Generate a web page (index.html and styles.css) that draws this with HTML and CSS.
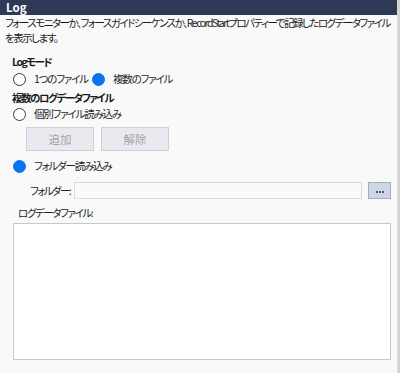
FILE: index.html
```html
<!DOCTYPE html>
<html lang="ja">
<head>
<meta charset="utf-8">
<link rel="stylesheet" href="styles.css">
</head>
<body>
<div class="window">
  <div class="panel">
    <div class="titlebar">Log</div>
    <div class="desc">フォースモニターか、フォースガイドシーケンスか、RecordStartプロパティーで記録したログデータファイルを表示します。</div>
    <div class="heading h-mode">Logモード</div>
    <div class="radio-row r-mode">
      <label class="radio r-first"><span class="dot"></span><span class="rtext">1つのファイル</span></label>
      <label class="radio"><span class="dot on"></span><span class="rtext">複数のファイル</span></label>
    </div>
    <div class="heading h-multi">複数のログデータファイル</div>
    <div class="radio-row r-single">
      <label class="radio"><span class="dot"></span><span class="rtext">個別ファイル読み込み</span></label>
    </div>
    <div class="btn-row">
      <div class="btn">追加</div>
      <div class="btn">解除</div>
    </div>
    <div class="radio-row r-folder">
      <label class="radio"><span class="dot on"></span><span class="rtext">フォルダー読み込み</span></label>
    </div>
    <div class="folder-row">
      <span class="flabel">フォルダー:</span>
      <div class="finput"></div>
      <div class="browse"><span class="dots"><i></i><i></i><i></i></span></div>
    </div>
    <div class="loglabel">ログデータファイル:</div>
    <div class="logbox"></div>
  </div>
  <div class="edge"></div>
</div>
</body>
</html>
```

FILE: styles.css
```css
html, body {
  margin: 0;
  padding: 0;
  background: #f9f9f9;
  width: 400px;
  height: 373px;
  overflow: hidden;
}
body {
  font-family: "Noto Sans CJK JP", "Noto Sans", sans-serif;
  font-size: 10.5px;
  letter-spacing: -1.2px;
  color: #1b1b1b;
  font-feature-settings: "palt";
  white-space: nowrap;
}
.window {
  display: flex;
  height: 373px;
}
.panel {
  width: 397px;
  display: flex;
  flex-direction: column;
}
.edge {
  width: 3px;
  background: linear-gradient(to right, #e4e4e4 0, #d2d2d2 1px, #d2d2d2 3px);
}
.titlebar {
  height: 15px;
  line-height: 15px;
  background: #2e3a55;
  color: #fff;
  font-weight: bold;
  font-size: 11.5px;
  letter-spacing: 0;
  padding-left: 6px;
}
.desc {
  padding: 0 0 0 5px;
  line-height: 15px;
  height: 30px;
  letter-spacing: -1.5px;
  white-space: normal;
}
.heading {
  font-weight: bold;
  font-size: 10.5px;
  letter-spacing: -1.5px;
  line-height: 15px;
  padding-left: 12px;
}
.h-mode { margin-top: 9px; }
.h-multi { margin-top: 3px; }
.radio-row {
  display: flex;
  align-items: center;
  height: 16px;
  padding-left: 13px;
  gap: 8px;
}
.r-mode { margin-top: 2px; }
.r-single { margin-top: 1px; }
.r-folder { margin-top: 7px; }
.radio {
  display: flex;
  align-items: center;
  gap: 8px;
}
.r-first { width: 71px; }
.dot {
  width: 11px;
  height: 11px;
  border-radius: 50%;
  border: 1px solid #3a3a3a;
  background: #fff;
  box-sizing: content-box;
  flex: none;
}
.dot.on {
  border-color: #0a74f0;
  background: #0a74f0;
}
.rtext {
  color: #222;
  line-height: 16px;
}
.btn-row {
  display: flex;
  gap: 7px;
  padding-left: 26px;
  margin-top: 5px;
}
.btn {
  width: 66px;
  height: 22px;
  border: 1px solid #cfcfd4;
  background: #e9e9ef;
  color: #a4a4a8;
  display: flex;
  align-items: center;
  justify-content: center;
  font-size: 11.5px;
  letter-spacing: 0;
}
.folder-row {
  display: flex;
  align-items: center;
  margin-top: 8px;
  padding-left: 30px;
  height: 16px;
}
.flabel {
  width: 44px;
  letter-spacing: -1.6px;
  color: #222;
}
.finput {
  width: 286px;
  height: 15px;
  border: 1px solid #dcdcdc;
  background: #fafafa;
}
.browse {
  margin-left: 6px;
  width: 21px;
  height: 15px;
  border: 1px solid #a8acb4;
  background: #cdd6e4;
  display: flex;
  align-items: center;
  justify-content: center;
}
.dots {
  display: flex;
  gap: 1px;
  margin-top: 3px;
}
.dots i {
  display: block;
  width: 2px;
  height: 2px;
  background: #4a5a80;
}
.loglabel {
  margin-top: 7px;
  padding-left: 18px;
  line-height: 15px;
  letter-spacing: -1.4px;
  color: #222;
}
.logbox {
  margin-top: 3px;
  margin-left: 13px;
  width: 376px;
  height: 135px;
  border: 1px solid #c8c8c8;
  background: #fff;
}
```
